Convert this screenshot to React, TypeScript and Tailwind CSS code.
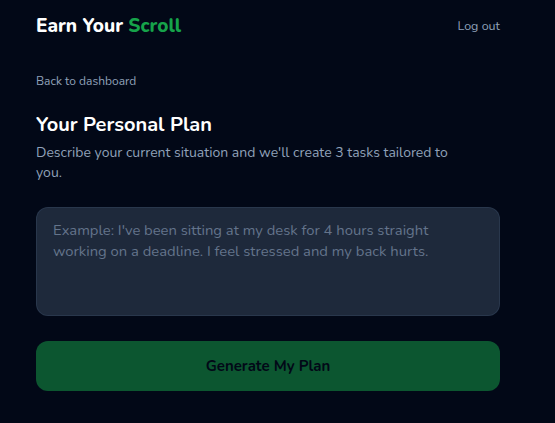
import React from "react";

export default function App() {
  return (
    <div
      className="min-h-[423px] w-full bg-[#020817] text-white"
      style={{ fontFamily: "Nunito, Lato, 'Noto Sans', sans-serif" }}
    >
      <div className="ml-9 w-[464px]">
        <header className="flex h-[51px] items-center justify-between">
          <div className="text-[19px] font-extrabold leading-7">
            Earn Your <span className="text-[#16a34a]">Scroll</span>
          </div>
          <button className="text-[12.5px] leading-4 text-slate-400">Log out</button>
        </header>

        <div className="mt-[22px] text-xs leading-4 text-slate-400">Back to dashboard</div>

        <h1 className="mt-[22px] text-xl font-bold leading-7">Your Personal Plan</h1>
        <p className="mt-1 text-sm leading-5 text-slate-400">
          Describe your current situation and we'll create 3 tasks tailored to
          <br />
          you.
        </p>

        <textarea
          className="mt-6 block h-[109px] w-full resize-none rounded-xl border border-slate-700/60 bg-[#1e293b] px-4 py-3 text-[14.8px] leading-[21px] text-slate-200 placeholder:text-[#64748b] focus:outline-none"
          placeholder={"Example: I've been sitting at my desk for 4 hours straight\nworking on a deadline. I feel stressed and my back hurts."}
        />

        <button
          disabled
          className="mt-[25px] flex h-[50px] w-full items-center justify-center rounded-xl bg-[#16a34a] text-[15px] font-bold text-[#020817] opacity-50"
        >
          Generate My Plan
        </button>
      </div>
    </div>
  );
}
